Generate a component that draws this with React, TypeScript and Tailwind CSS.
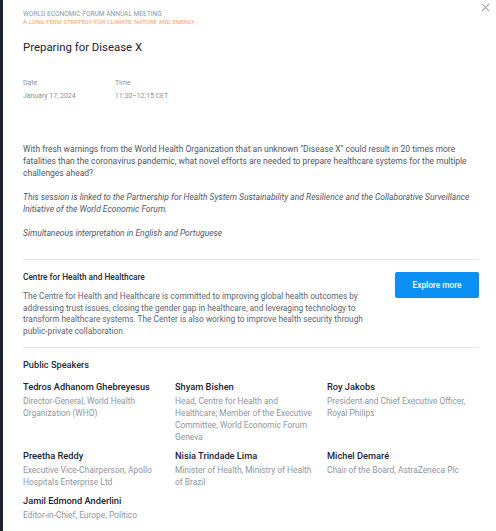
import React from "react";

const speakers = [
  { name: "Tedros Adhanom Ghebreyesus", title: "Director-General, World Health Organization (WHO)" },
  { name: "Shyam Bishen", title: "Head, Centre for Health and Healthcare; Member of the Executive Committee, World Economic Forum Geneva" },
  { name: "Roy Jakobs", title: "President and Chief Executive Officer, Royal Philips" },
  { name: "Preetha Reddy", title: "Executive Vice-Chairperson, Apollo Hospitals Enterprise Ltd" },
  { name: "Nisia Trindade Lima", title: "Minister of Health, Ministry of Health of Brazil" },
  { name: "Michel Demaré", title: "Chair of the Board, AstraZeneca Plc" },
  { name: "Jamil Edmond Anderlini", title: "Editor-in-Chief, Europe, Politico" },
];

export default function App() {
  return (
    <div className="flex h-[531px] w-[496px] overflow-hidden bg-[#1c212b]" style={{ fontFamily: "Roboto, 'Noto Sans', sans-serif" }}>
      <div className="ml-[3px] flex-1 bg-white relative">
        <button className="absolute right-[6px] top-[3px] text-[#9aa0ab]">
          <svg width="9" height="9" viewBox="0 0 10 10" fill="none" stroke="currentColor" strokeWidth="1.2">
            <path d="M1 1L9 9M9 1L1 9" />
          </svg>
        </button>
        <div className="pl-[20px] pr-[17px] pt-[11px]">
          <div className="leading-[7px] uppercase">
            <div className="text-[6.6px] text-[#8e96ab]">World Economic Forum Annual Meeting</div>
            <div className="text-[6.05px] text-[#f4a066]">A Long-Term Strategy for Climate, Nature and Energy</div>
          </div>
          <h1 className="mt-[13px] text-[11.4px] leading-[18px] text-[#1b2336] font-normal">Preparing for Disease X</h1>
          <div className="mt-[23px] flex text-[6.9px] leading-[9px]">
            <div className="w-[92px]">
              <div className="text-[#8a90a0]">Date</div>
              <div className="mt-[4px] text-[#8a90a0]">January 17, 2024</div>
            </div>
            <div>
              <div className="text-[#8a90a0]">Time</div>
              <div className="mt-[4px] text-[#8a90a0]">11:30–12:15 CET</div>
            </div>
          </div>
          <div className="mt-[42px] text-[8.5px] leading-[12px] text-[#4f5669]">
            <p>With fresh warnings from the World Health Organization that an unknown "Disease X" could result in 20 times more fatalities than the coronavirus pandemic, what novel efforts are needed to prepare healthcare systems for the multiple challenges ahead?</p>
            <p className="mt-[12px] italic">This session is linked to the Partnership for Health System Sustainability and Resilience and the Collaborative Surveillance Initiative of the World Economic Forum.</p>
            <p className="mt-[12px] italic">Simultaneous interpretation in English and Portuguese</p>
          </div>
          <div className="mt-[20px] border-t border-[#e6e7ea]" />
          <div className="flex items-start justify-between pt-[12px] pb-[9px]">
            <div className="w-[350px]">
              <div className="text-[8.3px] leading-[10px] font-medium text-[#232a3a]">Centre for Health and Healthcare</div>
              <p className="mt-[9px] text-[8.3px] leading-[11.7px] text-[#5d6475]">The Centre for Health and Healthcare is committed to improving global health outcomes by addressing trust issues, closing the gender gap in healthcare, and leveraging technology to transform healthcare systems. The Center is also working to improve health security through public-private collaboration.</p>
            </div>
            <button className="h-[26px] w-[84px] rounded-[2px] bg-[#0b8ff2] text-[8.3px] font-medium text-white">Explore more</button>
          </div>
          <div className="border-t border-[#e6e7ea]" />
          <div className="pt-[11px] text-[9.2px] leading-[12px] font-medium text-[#232a3a]">Public Speakers</div>
          <div className="mt-[10px] grid grid-cols-3 gap-x-[10px] gap-y-[7px] pr-[10px]">
            {speakers.map((s) => (
              <div key={s.name}>
                <div className="text-[9.25px] leading-[12px] font-medium text-[#1b2336]">{s.name}</div>
                <div className="mt-[2px] text-[8.4px] leading-[12px] text-[#9096a3]">{s.title}</div>
              </div>
            ))}
          </div>
        </div>
      </div>
    </div>
  );
}
